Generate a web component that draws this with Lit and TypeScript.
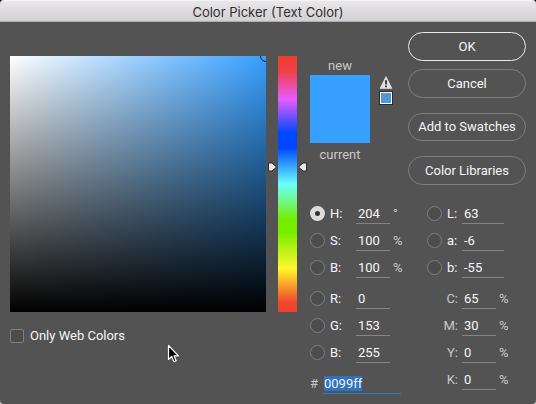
import { LitElement, html, css, svg, nothing } from "lit";
import { customElement, property, query } from "lit/decorators.js";
import { styleMap } from "lit/directives/style-map.js";

interface Channel {
  id: string;
  label: string;
  value: string;
  unit?: string;
  radio?: boolean;
  checked?: boolean;
}

const HSB: Channel[] = [
  { id: "hue", label: "H:", value: "204", unit: "°", radio: true, checked: true },
  { id: "saturation", label: "S:", value: "100", unit: "%", radio: true },
  { id: "brightness", label: "B:", value: "100", unit: "%", radio: true },
];
const RGB: Channel[] = [
  { id: "red", label: "R:", value: "0", radio: true },
  { id: "green", label: "G:", value: "153", radio: true },
  { id: "blue", label: "B:", value: "255", radio: true },
];
const LAB: Channel[] = [
  { id: "lightness", label: "L:", value: "63", radio: true },
  { id: "lab-a", label: "a:", value: "-6", radio: true },
  { id: "lab-b", label: "b:", value: "-55", radio: true },
];
const CMYK: Channel[] = [
  { id: "cyan", label: "C:", value: "65", unit: "%" },
  { id: "magenta", label: "M:", value: "30", unit: "%" },
  { id: "yellow", label: "Y:", value: "0", unit: "%" },
  { id: "black", label: "K:", value: "0", unit: "%" },
];

/* Vertical hue ramp with a pair of arrow markers at the current hue. */
@customElement("hue-slider")
export class HueSlider extends LitElement {
  @property({ type: Number }) hue = 0;

  static styles = css`
    :host { display: block; position: relative; width: 19px; }
    .ramp {
      height: 100%;
      background: linear-gradient(
        #f03e2c 0%, #ee4048 6%, #e65cff 17%, #0046ff 30%, #0048ff 36%,
        #6cffff 50%, #74ee00 64%, #78ee00 69%, #fff82c 83%, #f04a2c 96%, #f04030 100%
      );
    }
    .range { position: absolute; inset: 0; width: 100%; height: 100%; margin: 0; opacity: 0; writing-mode: vertical-lr; }
    .marker { position: absolute; width: 9px; height: 10px; margin-top: -5px; }
    .left { right: 100%; margin-right: 1px; }
    .right { left: 100%; margin-left: 1px; transform: scaleX(-1); }
  `;

  render() {
    const at = styleMap({ top: `${(1 - this.hue / 360) * 100}%` });
    const arrow = svg`<path d="M.5 1h3.500L8.500 5 4 9H.5z" fill="#e8e8e8" stroke="#2c2c2c" stroke-linejoin="round"/>`;
    return html`
      <div class="ramp"></div>
      <svg class="marker left" style=${at} viewBox="0 0 9 10" aria-hidden="true">${arrow}</svg>
      <svg class="marker right" style=${at} viewBox="0 0 9 10" aria-hidden="true">${arrow}</svg>
      <input class="range" type="range" min="0" max="360" .value=${String(this.hue)} aria-label="Hue" />
    `;
  }
}

@customElement("app-root")
export class AppRoot extends LitElement {
  @query(".hex-input") hexInput!: HTMLInputElement;

  static styles = css`
    :host {
      display: block;
      min-height: 100vh;
      background: linear-gradient(#111, #c4c4c4);
      font: 13px/16px Roboto, "Liberation Sans", sans-serif;
      color: #f6f6f6;
    }
    * { box-sizing: border-box; }
    .window {
      display: flex;
      flex-direction: column;
      min-height: 100vh;
      background: #535353;
      border-radius: 4px;
      overflow: hidden;
    }
    .titlebar {
      height: 22px;
      padding-top: 3px;
      background: linear-gradient(#e9e7e9, #d2d0d2);
      border-top: 1px solid #f5f4f5;
      border-bottom: 1px solid #b0aeb0;
      text-align: center;
      color: #2e2e2e;
    }
    .title { margin: 0; font: 400 13px/16px Inter, Roboto, sans-serif; }
    .body { display: flex; gap: 13px; padding: 10px 10px 7px; }
    .picker { flex: 1; min-width: 0; padding-top: 24px; }
    .spectrum { display: flex; gap: 12px; }
    .field {
      position: relative;
      flex: 1;
      aspect-ratio: 1;
      overflow: hidden;
      background: linear-gradient(transparent, #000), linear-gradient(to right, #fff, #369fff);
    }
    .spot {
      position: absolute;
      top: 0;
      right: 0;
      width: 12px;
      height: 12px;
      margin: -6px;
      border: 1px solid #10202c;
      border-radius: 50%;
    }
    .web-only { display: flex; align-items: center; gap: 6px; margin-top: 16px; }
    .check, .radio {
      appearance: none;
      flex: none;
      margin: 0;
      background: #4c4c4c;
      border: 1px solid #7e7e7e;
    }
    .check { width: 14px; height: 14px; border-radius: 2px; }
    .radio { width: 15px; height: 15px; border-radius: 50%; }
    .radio:checked { border: 5px solid #dcdcdc; background: #333; }
    .panel { flex: none; width: 216px; }
    .top { display: flex; height: 168px; }
    .preview { width: 60px; padding-top: 26px; text-align: center; color: #cacaca; }
    .swatch { height: 68px; margin: 1px 0 4px; background: #369fff; }
    .alerts { display: flex; flex-direction: column; align-items: center; gap: 2px; width: 14px; margin: 44px 15px 0 9px; }
    .icon-button { display: block; padding: 0; border: 0; background: none; }
    .icon-button svg { display: block; }
    .gamut { width: 14px; height: 14px; background: #5197d6; border: 1px solid #2c2c2c; box-shadow: inset 0 0 0 1px #fff; }
    .actions { display: flex; flex-direction: column; flex: 1; }
    .button {
      height: 29px;
      margin-bottom: 15px;
      padding: 1px 0 0;
      border: 1px solid #7e7e7e;
      border-radius: 15px;
      background: none;
      color: inherit;
      font: inherit;
    }
    .primary { margin-bottom: 8px; border-color: #ececec; }
    .channels { display: flex; }
    .column { width: 117px; }
    .column.second { width: 99px; }
    .group { margin-bottom: 4px; }
    .row { display: flex; align-items: center; height: 27px; }
    .label { width: 26px; margin-left: 5px; }
    .second .label { width: 15px; }
    .second .label.plain { width: 31px; margin: 0 4px 0 0; text-align: right; }
    .plain, .unit, .hash { color: #c8c8c8; }
    .input {
      width: 34px;
      height: 21px;
      padding: 0 2px;
      border: 0;
      border-bottom: 1px solid #858585;
      border-radius: 0;
      outline: 0;
      background: none;
      color: inherit;
      font: inherit;
    }
    .wide { width: 42px; }
    .unit { margin-left: 3px; }
    .input.hex-input { width: 79px; border-bottom-color: #2f78cc; }
    .hex-input::selection { background: rgba(47, 115, 188, 0.99); color: #f2f2f2; }
    .hash { width: 12px; }
    .pointer { position: absolute; left: 167px; top: 344px; pointer-events: none; }
  `;

  firstUpdated() {
    this.hexInput.focus();
    this.hexInput.select();
  }

  private row(c: Channel, wide = false) {
    return html`
      <div class="row">
        ${c.radio
          ? html`<input class="radio" type="radio" name="channel" ?checked=${c.checked} aria-label=${c.id} />`
          : nothing}
        <label class="label ${c.radio ? "" : "plain"}" for=${c.id}>${c.label}</label>
        <input class="input ${wide ? "wide" : ""}" id=${c.id} type="text" .value=${c.value} />
        ${c.unit ? html`<span class="unit">${c.unit}</span>` : nothing}
      </div>
    `;
  }

  render() {
    return html`
      <main class="window">
        <header class="titlebar"><h1 class="title">Color Picker (Text Color)</h1></header>
        <div class="body">
          <section class="picker">
            <div class="spectrum">
              <div class="field"><span class="spot"></span></div>
              <hue-slider .hue=${204}></hue-slider>
            </div>
            <label class="web-only"><input class="check" type="checkbox" />Only Web Colors</label>
          </section>
          <section class="panel">
            <div class="top">
              <div class="preview">
                <div>new</div>
                <div class="swatch"></div>
                <div>current</div>
              </div>
              <div class="alerts">
                <button class="icon-button" aria-label="Out of gamut">
                  <svg width="14" height="13" viewBox="0 0 14 13">
                    <path d="M7 .5 13 12.500H1z" fill="#e0e0e0" stroke="#e0e0e0" stroke-width=".6" stroke-linejoin="round" />
                    <path d="M6 4.200h2v4.300H6zM6 9.500h2v1.700H6z" fill="#444" />
                  </svg>
                </button>
                <button class="icon-button gamut" aria-label="Use nearest color"></button>
              </div>
              <div class="actions">
                <button class="button primary">OK</button>
                <button class="button">Cancel</button>
                <button class="button">Add to Swatches</button>
                <button class="button">Color Libraries</button>
              </div>
            </div>
            <div class="channels">
              <div class="column">
                <div class="group">${HSB.map((c) => this.row(c))}</div>
                <div class="group">${RGB.map((c) => this.row(c))}</div>
                <div class="row">
                  <label class="hash" for="hex">#</label>
                  <input class="input hex-input" id="hex" type="text" .value=${"0099ff"} />
                </div>
              </div>
              <div class="column second">
                <div class="group">${LAB.map((c) => this.row(c, true))}</div>
                <div class="group">${CMYK.map((c) => this.row(c))}</div>
              </div>
            </div>
          </section>
        </div>
      </main>
      <svg class="pointer" width="13" height="20" viewBox="0 0 13 20" aria-hidden="true">
        <path d="M1.500 1.500v14l3.200-3 2.300 5.200 2.200-1-2.200-4.900h4.500z" fill="#000" stroke="#fff" stroke-width="1.200" stroke-linejoin="round" />
      </svg>
    `;
  }
}
